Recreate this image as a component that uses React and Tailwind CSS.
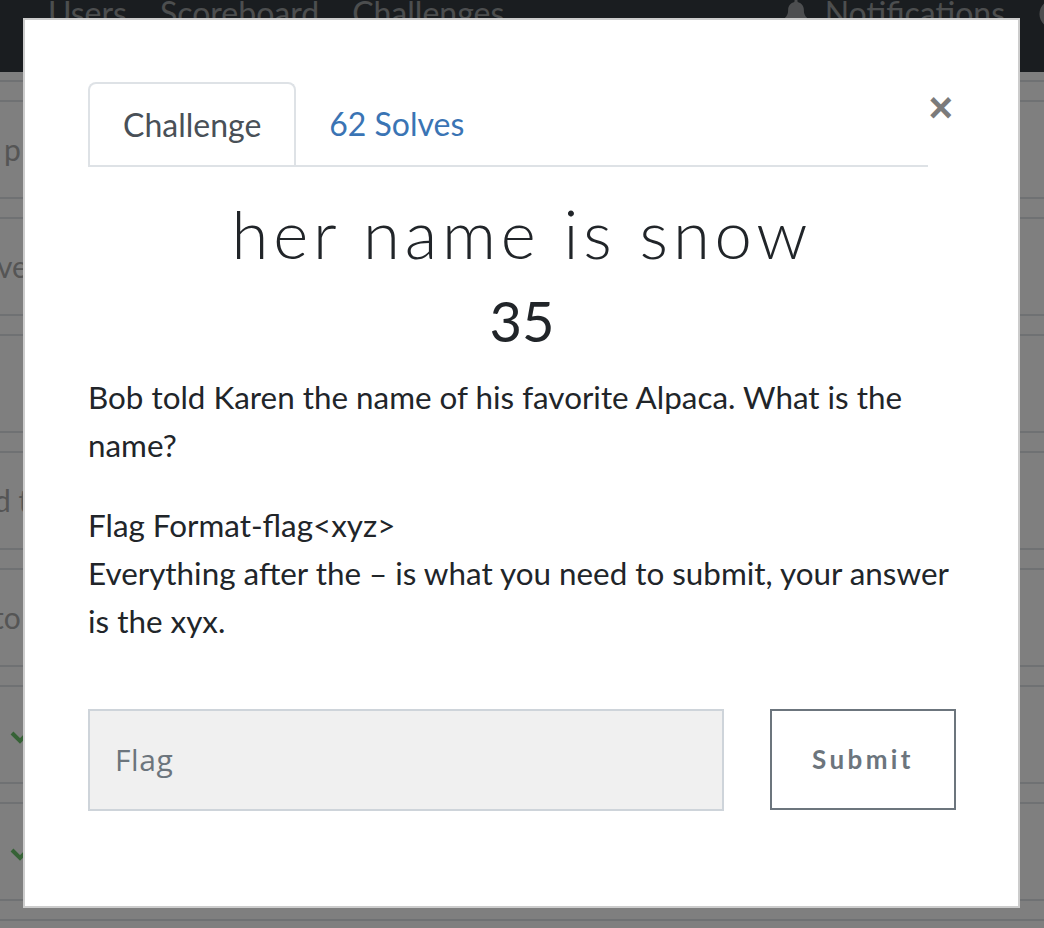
import React from 'react';
import { FaBell, FaUserCircle } from 'react-icons/fa';

const rows = [
  { text: '', h: 'h-[10px]' },
  { text: 'p', ml: 'ml-[4px]' },
  { text: 've', ml: 'ml-[-3px]' },
  { text: '' },
  { text: 'd t', ml: 'ml-[-6px]' },
  { text: 'to', ml: 'ml-[-7px]' },
  { check: true },
  { check: true },
  { text: '' },
];

const Check = () => (
  <svg width="24" height="24" viewBox="0 0 24 24" className="ml-[10px]">
    <path d="M2 10 L10 18 L26 2" stroke="#6cc46c" strokeWidth="4" fill="none" />
  </svg>
);

const App = () => {
  return (
    <div className="relative w-[1044px] h-[928px] overflow-hidden bg-white font-['Lato','Liberation_Sans',sans-serif]">
      {/* page behind the modal */}
      <nav className="h-[72px] bg-[#343a40] flex items-start text-[32px] text-white/50">
        <div className="flex gap-[33px] ml-[48px] mt-[-11px]">
          <span>Users</span>
          <span>Scoreboard</span>
          <span>Challenges</span>
        </div>
        <div className="flex items-start ml-auto mt-[-11px]">
          <FaBell className="w-[22px] h-[30px] mt-[8px] mr-[18px]" />
          <span>Notifications</span>
          <FaUserCircle className="w-[30px] h-[30px] ml-[34px] mr-[-25px] mt-[10px]" />
        </div>
      </nav>
      <div className="flex flex-col gap-[18px] text-[30px] text-[#aaa]">
        {rows.map((r, i) => (
          <div
            key={i}
            className={`${r.h || 'h-[99px]'} ${i > 0 ? 'border-t-2' : ''} border-b-2 border-[#dee2e6] flex items-center`}
          >
            {r.check ? <Check /> : <span className={r.ml}>{r.text}</span>}
          </div>
        ))}
      </div>

      {/* backdrop */}
      <div className="absolute inset-0 bg-black/50" />

      {/* modal */}
      <div className="absolute left-[23px] top-[18px] w-[997px] h-[890px] bg-white border-2 border-black/20 pl-[63px] pr-[62px] pt-[62px] text-[#212529]">
        <div className="flex items-start">
          <div className="flex-1 flex border-b-2 border-[#dee2e6] text-[32px]">
            <div className="h-[83px] mb-[-2px] px-[33px] flex items-center border-2 border-b-0 border-[#dee2e6] rounded-t-[8px] bg-white text-[#495057]">
              Challenge
            </div>
            <div className="h-[83px] px-[33px] flex items-center text-[#3a74b4]">62 Solves</div>
          </div>
          <button className="w-[28px] mt-[5px] pr-[3px] text-[42px] leading-none font-bold text-[#7b7b7b] text-right font-['Liberation_Sans',sans-serif]">
            ×
          </button>
        </div>

        <h2 className="mt-[26px] text-center text-[67px] leading-[1.2] font-light tracking-[0.072em] font-['Lato','Liberation_Sans',sans-serif]">
          her name is snow
        </h2>
        <h3 className="mt-[14px] text-center text-[56px] leading-[1.2]">35</h3>

        <div className="mt-[18px] text-[31.4px] leading-[48px]">
          <p>Bob told Karen the name of his favorite Alpaca. What is the name?</p>
          <p className="mt-[32px]">
            Flag Format-flag&lt;xyz&gt;
            <br />
            Everything after the – is what you need to submit, your answer is the xyx.
          </p>
        </div>

        <div className="mt-[64px] flex items-center justify-between">
          <input
            placeholder="Flag"
            className="w-[636px] h-[102px] bg-[#f0f0f0] border-2 border-[#ced4da] px-[25px] text-[30px] tracking-[0.02em] text-[#495057] placeholder:text-[#6c757d] outline-none font-['Open_Sans','Lato',sans-serif]"
          />
          <button className="w-[186px] h-[101px] border-2 border-[#6c757d] text-[#6c757d] text-[26px] font-bold tracking-[0.13em]">
            Submit
          </button>
        </div>
      </div>
    </div>
  );
};

export default App;
